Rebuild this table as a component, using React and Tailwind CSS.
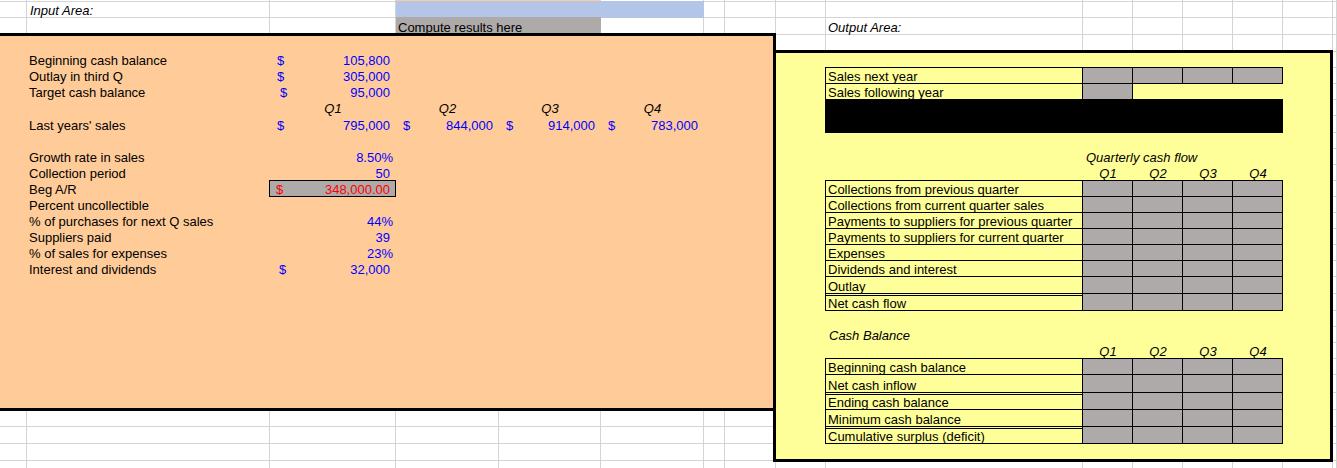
import React from "react";

const Cell = ({ className = "", children }) => (
  <div className={`flex items-end whitespace-nowrap pb-px leading-[12px] ${className}`}>
    {children}
  </div>
);

const Money = ({ className = "", pad = "pl-[7px]", value, color = "text-[#0000ff]" }) => (
  <div
    className={`flex items-end justify-between whitespace-nowrap pb-px pr-[6px] leading-[12px] ${pad} ${color} ${className}`}
  >
    <span>$</span>
    <span>{value}</span>
  </div>
);

const Box = ({ className = "", children }) => (
  <div
    className={`-ml-px -mt-px flex items-end whitespace-nowrap border border-black pl-[2px] leading-[12px] ${className}`}
  >
    {children}
  </div>
);

const Gray = ({ className = "" }) => (
  <div className={`-ml-px -mt-px border border-black bg-[#aeaaaa] ${className}`} />
);

// label in column J, four grey result cells in K..N
const ResultRow = ({ row, label, double }) => (
  <>
    <Box className={`col-start-10 ${row} ${double ? "border-t-[3px] border-double" : ""}`}>{label}</Box>
    <Gray className={`col-start-11 ${row}`} />
    <Gray className={`col-start-12 ${row}`} />
    <Gray className={`col-start-13 ${row}`} />
    <Gray className={`col-start-14 ${row}`} />
  </>
);

const Quarters = ({ row }) => (
  <>
    <Cell className={`col-start-11 ${row} justify-center italic`}>Q1</Cell>
    <Cell className={`col-start-12 ${row} justify-center italic`}>Q2</Cell>
    <Cell className={`col-start-13 ${row} justify-center italic`}>Q3</Cell>
    <Cell className={`col-start-14 ${row} justify-center italic`}>Q4</Cell>
  </>
);

export default function App() {
  return (
    <div className="h-[468px] w-[1337px] overflow-hidden bg-white font-['Liberation_Sans',Arial,sans-serif] text-[13px] text-black">
      <div className="grid grid-cols-[27px_243px_126px_103px_102px_103px_21px_51px_50px_257px_50px_50px_50px_50px_50px_1fr] grid-rows-[2px_16px_17px_17px_16px_16px_16px_16px_17px_16px_16px_16px_16px_16px_16px_16px_16px_16px_17px_17px_16px_16px_16px_16px_18px_17px_17px_17px_17px_17px]">
        {/* sheet gridlines */}
        <div className="col-span-full row-span-full grid grid-cols-subgrid grid-rows-subgrid">
          {Array.from({ length: 16 * 30 }, (_, i) => (
            <div key={i} className="border-b border-r border-[#d4d4d4]" />
          ))}
        </div>

        {/* header strip */}
        <div className="col-start-4 col-end-6 row-start-1 bg-[#ffcc99]" />
        <Cell className="col-start-2 row-start-2 pl-[3px] italic">Input Area:</Cell>
        <div className="col-start-4 col-end-7 row-start-2 -mt-px bg-[#b4c6e7]" />
        <Cell className="col-start-4 col-end-6 row-start-3 -mt-px bg-[#aeaaaa] pl-[2px]">Compute results here</Cell>
        <Cell className="col-start-10 row-start-3 pl-[2px] italic">Output Area:</Cell>

        {/* input area */}
        <div className="col-start-1 col-end-9 row-start-4 row-end-27 -mb-px -mt-[2px] border-[3px] border-l-0 border-black bg-[#ffcc99]" />

        {/* output area */}
        <div className="col-start-9 col-end-16 row-start-5 row-end-30 -mb-px -ml-[3px] -mt-[2px] border-[3px] border-black bg-[#ffff99]" />

        <Cell className="col-start-2 row-start-5 pl-[2px]">Beginning cash balance</Cell>
        <Money className="col-start-3 row-start-5" value="105,800" />
        <Cell className="col-start-2 row-start-6 pl-[2px]">Outlay in third Q</Cell>
        <Money className="col-start-3 row-start-6" value="305,000" />
        <Cell className="col-start-2 row-start-7 pl-[2px]">Target cash balance</Cell>
        <Money className="col-start-3 row-start-7" pad="pl-[10px]" value="95,000" />

        <Cell className="col-start-3 row-start-8 justify-center italic">Q1</Cell>
        <Cell className="col-start-4 row-start-8 justify-center italic">Q2</Cell>
        <Cell className="col-start-5 row-start-8 justify-center italic">Q3</Cell>
        <Cell className="col-start-6 row-start-8 justify-center italic">Q4</Cell>

        <Cell className="col-start-2 row-start-9 pl-[2px]">Last years' sales</Cell>
        <Money className="col-start-3 row-start-9" value="795,000" />
        <Money className="col-start-4 row-start-9" value="844,000" />
        <Money className="col-start-5 row-start-9" value="914,000" />
        <Money className="col-start-6 row-start-9" value="783,000" />

        <Cell className="col-start-2 row-start-11 pl-[2px]">Growth rate in sales</Cell>
        <Cell className="col-start-3 row-start-11 justify-end pr-[3px] text-[#0000ff]">8.50%</Cell>
        <Cell className="col-start-2 row-start-12 pl-[2px]">Collection period</Cell>
        <Cell className="col-start-3 row-start-12 justify-end pr-[6px] text-[#0000ff]">50</Cell>
        <Cell className="col-start-2 row-start-13 pl-[2px]">Beg A/R</Cell>
        <div className="col-start-3 row-start-13 -ml-px -mt-px flex items-end justify-between border border-black bg-[#aeaaaa] pl-[6px] pr-[5px] leading-[12px] text-[#ff0000]">
          <span>$</span>
          <span>348,000.00</span>
        </div>
        <Cell className="col-start-2 row-start-14 pl-[2px]">Percent uncollectible</Cell>
        <Cell className="col-start-2 row-start-15 pl-[2px]">% of purchases for next Q sales</Cell>
        <Cell className="col-start-3 row-start-15 justify-end pr-[3px] text-[#0000ff]">44%</Cell>
        <Cell className="col-start-2 row-start-16 pl-[2px]">Suppliers paid</Cell>
        <Cell className="col-start-3 row-start-16 justify-end pr-[6px] text-[#0000ff]">39</Cell>
        <Cell className="col-start-2 row-start-17 pl-[2px]">% of sales for expenses</Cell>
        <Cell className="col-start-3 row-start-17 justify-end pr-[3px] text-[#0000ff]">23%</Cell>
        <Cell className="col-start-2 row-start-18 pl-[2px]">Interest and dividends</Cell>
        <Money className="col-start-3 row-start-18" pad="pl-[9px]" value="32,000" />

        {/* sales */}
        <ResultRow row="row-start-6" label="Sales next year" />
        <Box className="col-start-10 row-start-7">Sales following year</Box>
        <Gray className="col-start-11 row-start-7" />
        <div className="col-start-10 col-end-15 row-start-8 row-end-10 -ml-px -mt-px bg-black" />

        {/* quarterly cash flow */}
        <Cell className="col-start-11 row-start-11 pl-[3px] italic">Quarterly cash flow</Cell>
        <Quarters row="row-start-12" />
        <ResultRow row="row-start-13" label="Collections from previous quarter" />
        <ResultRow row="row-start-14" label="Collections from current quarter sales" />
        <ResultRow row="row-start-15" label="Payments to suppliers for previous quarter" />
        <ResultRow row="row-start-16" label="Payments to suppliers for current quarter" />
        <ResultRow row="row-start-17" label="Expenses" />
        <ResultRow row="row-start-18" label="Dividends and interest" />
        <ResultRow row="row-start-19" label="Outlay" />
        <ResultRow row="row-start-20" label="Net cash flow" double />

        {/* cash balance */}
        <Cell className="col-start-10 row-start-22 pl-[3px] italic">Cash Balance</Cell>
        <Quarters row="row-start-23" />
        <ResultRow row="row-start-24" label="Beginning cash balance" />
        <ResultRow row="row-start-25" label="Net cash inflow" />
        <ResultRow row="row-start-26" label="Ending cash balance" double />
        <ResultRow row="row-start-27" label="Minimum cash balance" />
        <ResultRow row="row-start-28" label="Cumulative surplus (deficit)" double />
      </div>
    </div>
  );
}
